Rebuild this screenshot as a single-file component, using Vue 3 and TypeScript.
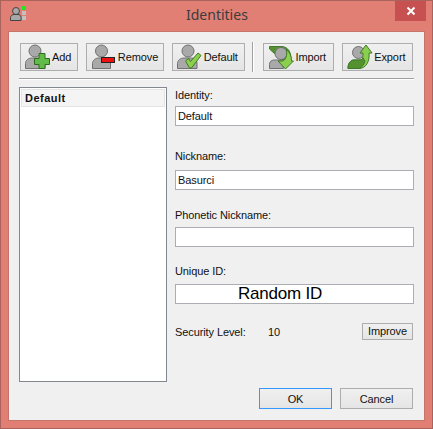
<template>
  <div class="window">
    <header class="titlebar">
      <svg class="app-icon" width="18" height="16" viewBox="0 0 18 16">
        <circle cx="6" cy="5" r="3.5" fill="#a8a8a8" stroke="#444" />
        <path d="M.5 14.5v-3c0-2 2-3 3.5-3h4c1.500 0 3 1 3 3v3z" fill="#a8a8a8" stroke="#444" />
        <rect x="12" y="0" width="4" height="4" fill="#22e622" />
        <rect x="12" y="5" width="4" height="4" fill="#c8c0c0" />
        <rect x="12" y="10" width="4" height="4" fill="#c8c0c0" />
      </svg>
      <span class="title">Identities</span>
      <button class="close">
        <svg width="10" height="10" viewBox="0 0 10 10">
          <path d="M1.500 1.500l7 7M8.500 1.500l-7 7" stroke="#fff" stroke-width="2" />
        </svg>
      </button>
    </header>

    <main class="client">
      <div class="toolbar">
        <button class="tool tool-add">
          <svg width="27" height="26" viewBox="0 0 27 26">
            <circle cx="10" cy="7" r="6" fill="#a9a9a9" stroke="#707070" />
            <path d="M.5 24.500v-5c0-3 3-5.500 6-5.500h7c3 0 6.500 2 6.500 5v5.500z" fill="#a9a9a9" stroke="#707070" />
            <path d="M14 9.500h6v5h4.500v6H20v4h-6v-4H9.500v-6H14z" fill="#62bb48" stroke="#2e6a1f" />
          </svg>
          Add
        </button>
        <button class="tool tool-remove">
          <svg width="27" height="26" viewBox="0 0 27 26">
            <circle cx="10.500" cy="7" r="6" fill="#a9a9a9" stroke="#707070" />
            <path d="M1.500 24.500v-5c0-3 3-5.500 6-5.500h7c3 0 5 2 5 5v5.500z" fill="#a9a9a9" stroke="#707070" />
            <rect x="10.500" y="13.500" width="13" height="5" fill="#ee1111" stroke="#222" />
          </svg>
          Remove
        </button>
        <button class="tool tool-default">
          <svg width="27" height="26" viewBox="0 0 27 26">
            <circle cx="11" cy="7" r="6" fill="#a9a9a9" stroke="#707070" />
            <path d="M.5 24.500v-5c0-3 3-5.500 6-5.500h8c3 0 5.500 2 5.500 5v5.500z" fill="#a9a9a9" stroke="#707070" />
            <path d="M8.500 17l3-2.500 2 3 7.500-8.500 3 2.500-9.500 12.500h-2z" fill="#8ccf4e" stroke="#3f7a22" />
          </svg>
          Default
        </button>
        <span class="divider"></span>
        <button class="tool tool-import">
          <svg width="27" height="26" viewBox="0 0 27 26">
            <path d="M1.500 2.500H14c6 .5 9 5.500 9 12.500l-9 1c0-5-3-8-7-8v2l-5.500-5z" fill="#55922f" stroke="#3f7a2a" />
            <circle cx="13" cy="9.500" r="6" fill="#a9a9a9" stroke="#707070" />
            <path d="M1.500 24.500v-4c0-3 2-4.500 5-4.500h7l2 8.500z" fill="#a9a9a9" stroke="#707070" />
            <path d="M18.500 5.500c3 2.500 5 6 5 11.500h2l-8 8-7.500-8h4c3.500 0 5.500-6 4.500-11.500z" fill="#8ccf4e" stroke="#3f7a2a" />
          </svg>
          Import
        </button>
        <button class="tool tool-export">
          <svg width="27" height="26" viewBox="0 0 27 26">
            <circle cx="11.500" cy="8.500" r="6" fill="#a9a9a9" stroke="#707070" />
            <path d="M1 24.500c0-4.500 2-8 5.500-8.500H13c3 0 3-4 3-7h-3l6-8 6 8h-3c1 8-3 15.500-10 15.500z" fill="#8ccf4e" stroke="#3f7a2a" />
            <path d="M1 24.500c0-4.500 2-8 5.500-8.500H13c2 0 3-1 3-2l2 3c-1 4-3 6-6 7.500z" fill="#55922f" stroke="#3f7a2a" />
          </svg>
          Export
        </button>
      </div>
      <div class="rule"></div>

      <div class="content">
        <div class="list">
          <div class="list-item">Default</div>
        </div>
        <div class="form">
          <label class="field field-identity">
            <span>Identity:</span>
            <input value="Default" />
          </label>
          <label class="field field-nickname">
            <span>Nickname:</span>
            <input value="Basurci" />
          </label>
          <label class="field field-phonetic">
            <span>Phonetic Nickname:</span>
            <input value="" />
          </label>
          <label class="field field-unique">
            <span>Unique ID:</span>
            <div class="random-id">Random ID</div>
          </label>
          <div class="security">
            <span class="security-label">Security Level:</span>
            <span class="security-value">10</span>
            <button class="improve">Improve</button>
          </div>
          <div class="actions">
            <button class="action action-ok">OK</button>
            <button class="action">Cancel</button>
          </div>
        </div>
      </div>
    </main>
  </div>
</template>

<script setup lang="ts">
</script>

<style>
  html,
  body {
    margin: 0;
    background: #e27f75;
  }
</style>

<style scoped>
  .window {
    box-sizing: border-box;
    width: 433px;
    height: 429px;
    display: flex;
    flex-direction: column;
    padding: 0 7px 7px;
    background: #e27f75;
    border: 1px solid #a9635c;
    font-family: "Liberation Sans", sans-serif;
    font-size: 11px;
    letter-spacing: -0.1px;
    color: #111;
  }

  .titlebar {
    height: 30px;
    flex: none;
    display: flex;
    align-items: center;
    position: relative;
  }

  .app-icon {
    margin: 0 0 4px 2px;
  }

  .title {
    position: absolute;
    left: 178px;
    top: 3px;
    font-family: "Noto Sans", sans-serif;
    font-size: 14px;
    line-height: 22px;
    letter-spacing: 0;
    color: #3c3c3c;
  }

  .close {
    position: absolute;
    right: -1px;
    top: 0;
    width: 31px;
    height: 20px;
    border: none;
    padding: 0;
    display: flex;
    align-items: center;
    justify-content: center;
    background: #c75050;
  }

  .client {
    flex: 1;
    min-height: 0;
    box-sizing: border-box;
    padding: 10px 11px 0;
    background: #f0f0f0;
    border: 1px solid #c7746b;
  }

  .toolbar {
    display: flex;
    align-items: center;
    height: 30px;
  }

  button {
    font: inherit;
    color: inherit;
    letter-spacing: inherit;
  }

  .tool {
    box-sizing: border-box;
    height: 28px;
    margin-right: 8px;
    padding: 0 0 0 4px;
    display: flex;
    align-items: center;
    white-space: nowrap;
    border: 1px solid #adadad;
    background: linear-gradient(#f0f0f0, #e5e5e5);
  }

  .tool svg {
    flex: none;
  }

  .tool-add {
    width: 58px;
  }

  .tool-remove {
    width: 78px;
  }

  .tool-default {
    width: 74px;
    margin-right: 7px;
  }

  .tool-import,
  .tool-export {
    width: 71px;
  }

  .tool-export {
    margin-right: 0;
  }

  .divider {
    width: 1px;
    height: 30px;
    margin-right: 9px;
    background: #a0a0a0;
    border-right: 1px solid #fff;
  }

  .rule {
    height: 1px;
    margin: 6px 0 0 -1px;
    width: 395px;
    background: #a0a0a0;
    border-bottom: 1px solid #fff;
  }

  .content {
    display: flex;
    gap: 8px;
    margin: 7px 0 0 -1px;
  }

  .list {
    box-sizing: border-box;
    width: 148px;
    height: 295px;
    flex: none;
    padding: 1px;
    background: #fff;
    border: 1px solid #828790;
  }

  .list-item {
    box-sizing: border-box;
    height: 18px;
    padding-left: 3px;
    line-height: 16px;
    font-weight: 700;
    letter-spacing: 0.5px;
    border: 1px solid #e4e4e4;
    background: #f4f4f4;
  }

  .form {
    width: 239px;
    display: flex;
    flex-direction: column;
  }

  .field {
    display: flex;
    flex-direction: column;
    gap: 5px;
  }

  .field span {
    line-height: 14px;
  }

  .field input,
  .random-id {
    box-sizing: border-box;
    height: 20px;
    width: 239px;
    padding: 0 0 0 2px;
    border: 1px solid #abadb3;
    border-radius: 0;
    background: #fff;
    font: inherit;
    letter-spacing: inherit;
    color: inherit;
    outline: none;
  }

  .field-identity {
    padding-top: 1px;
    gap: 4px;
  }

  .field-nickname {
    margin-top: 23px;
    gap: 7px;
  }

  .field-phonetic {
    margin-top: 18px;
    gap: 5px;
  }

  .field-unique {
    margin-top: 17px;
    gap: 6px;
  }

  .random-id {
    padding: 0 0 0 62px;
    font-size: 17px;
    letter-spacing: -0.2px;
    line-height: 18px;
    color: #000;
  }

  .security {
    display: flex;
    align-items: center;
    margin-top: 19px;
    height: 17px;
  }

  .security-label {
    width: 93px;
    padding-top: 1px;
  }

  .security-value {
    flex: 1;
    padding-top: 1px;
  }

  .improve {
    box-sizing: border-box;
    width: 51px;
    height: 17px;
    margin-right: 1px;
    padding: 0;
    line-height: 15px;
    border: 1px solid #adadad;
    background: linear-gradient(#f0f0f0, #e5e5e5);
  }

  .actions {
    display: flex;
    justify-content: flex-end;
    gap: 8px;
    margin: 48px 1px 0 0;
  }

  .action {
    box-sizing: border-box;
    width: 73px;
    height: 21px;
    padding: 0;
    border: 1px solid #adadad;
    background: linear-gradient(#f0f0f0, #e5e5e5);
  }

  .action-ok {
    border-color: #3399ff;
  }
</style>
